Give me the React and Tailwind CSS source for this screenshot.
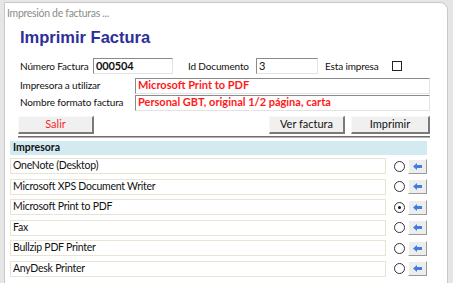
import React from "react";

const printers = [
  { name: "OneNote (Desktop)", selected: false },
  { name: "Microsoft XPS Document Writer", selected: false },
  { name: "Microsoft Print to PDF", selected: true },
  { name: "Fax", selected: false },
  { name: "Bullzip PDF Printer", selected: false },
  { name: "AnyDesk Printer", selected: false },
];

const font = { fontFamily: 'Lato, "Open Sans", sans-serif' };

const Sunken = ({ className, children }) => (
  <div
    className={`h-[16px] bg-white border-t border-l border-t-[#8a8a8a] border-l-[#8a8a8a] border-r border-b border-r-[#e3e3e3] border-b-[#e3e3e3] flex items-center px-[2px] whitespace-nowrap overflow-hidden ${className}`}
  >
    {children}
  </div>
);

const Btn = ({ className, children }) => (
  <div
    className={`h-[18px] bg-[#f0f0f0] border-t border-l border-t-[#f8f8f8] border-l-[#f8f8f8] border-r-2 border-b-2 border-r-[#7a7a7a] border-b-[#7a7a7a] flex items-center justify-center text-[11px] ${className}`}
  >
    {children}
  </div>
);

const Arrow = () => (
  <div className="w-[19px] h-[15px] bg-[#ededed] border-r border-b border-r-[#9a9a9a] border-b-[#9a9a9a] border-t border-l border-t-white border-l-white flex items-center justify-center">
    <svg width="9" height="7" viewBox="0 0 9 7">
      <path d="M0 3.5 L4 0 L4 2 L9 2 L9 5 L4 5 L4 7 Z" fill="#3d7fe0" />
    </svg>
  </div>
);

const Radio = ({ on }) => (
  <div className="w-[11px] h-[11px] rounded-full border border-[#333] bg-white flex items-center justify-center">
    {on && <div className="w-[3px] h-[3px] rounded-full bg-[#111]" />}
  </div>
);

export default function App() {
  return (
    <div className="w-[453px] h-[283px] bg-[#e6e6e6] overflow-hidden pt-[2px] pl-[4px]" style={font}>
      <div className="w-[444px] h-[290px] bg-white border border-[#c8c8c8] rounded-tr-[8px] flex flex-col">
        <div className="h-[22px] flex items-center pl-[2px] text-[10.5px] tracking-[-0.3px] text-[#8c8c8c]">
          Impresión de facturas ...
        </div>
        <div
          className="pl-[15px] mt-[4px] h-[20px] text-[16.5px] font-bold text-[#2e2e9a] leading-none"
          style={{ fontFamily: '"Liberation Sans", Arial, sans-serif' }}
        >
          Imprimir Factura
        </div>
        <div className="pl-[15px] pr-[17px] mt-[9px] flex flex-col text-[10px] tracking-[-0.15px] text-[#111] whitespace-nowrap">
          <div className="flex items-center h-[16px]">
            <span className="w-[73px]">Número Factura</span>
            <Sunken className="w-[80px] font-bold text-[11px]">000504</Sunken>
            <span className="ml-[15px] w-[68px]">Id Documento</span>
            <Sunken className="w-[62px] text-[11px]">3</Sunken>
            <span className="ml-[7px] w-[67px]">Esta impresa</span>
            <div className="w-[10px] h-[10px] border border-[#222] bg-white" />
          </div>
          <div className="flex items-center h-[15px] mt-[4px]">
            <span className="w-[115px]">Impresora a utilizar</span>
            <Sunken className="flex-1 h-[15px] font-bold text-[11px] tracking-normal text-[#ff1a1a]">
              Microsoft Print to PDF
            </Sunken>
          </div>
          <div className="flex items-center h-[15px] mt-[2px]">
            <span className="w-[115px]">Nombre formato factura</span>
            <Sunken className="flex-1 h-[15px] font-bold text-[11px] tracking-normal text-[#ff1a1a]">
              Personal GBT, original 1/2 página, carta
            </Sunken>
          </div>
          <div className="flex items-center mt-[6px] -ml-[2px] tracking-normal">
            <Btn className="w-[76px] text-[#f02b2b]">Salir</Btn>
            <div className="flex-1" />
            <Btn className="w-[76px]">Ver factura</Btn>
            <Btn className="w-[79px] ml-[6px]">Imprimir</Btn>
          </div>
          <div className="mt-[2px] -ml-[2px] h-[2px] border-t border-b border-t-[#6e6e6e] border-b-[#b0b0b0]" />
        </div>
        <div className="pl-[5px] pr-[20px] mt-[3px] flex flex-col">
          <div className="h-[14px] bg-[#d3eaf1] flex items-center pl-[3px] text-[10.5px] font-bold text-[#111]">
            Impresora
          </div>
          <div className="flex flex-col gap-[4.5px] mt-[3px]">
            {printers.map((p) => (
              <div key={p.name} className="flex items-center h-[16px]">
                <div className="w-[377px] h-[16px] border border-[#e8e3d3] bg-white flex items-center pl-[2px] text-[10.5px] tracking-[-0.25px] text-[#111]">
                  {p.name}
                </div>
                <div className="ml-[8px]">
                  <Radio on={p.selected} />
                </div>
                <div className="ml-[3px]">
                  <Arrow />
                </div>
              </div>
            ))}
          </div>
        </div>
      </div>
    </div>
  );
}
